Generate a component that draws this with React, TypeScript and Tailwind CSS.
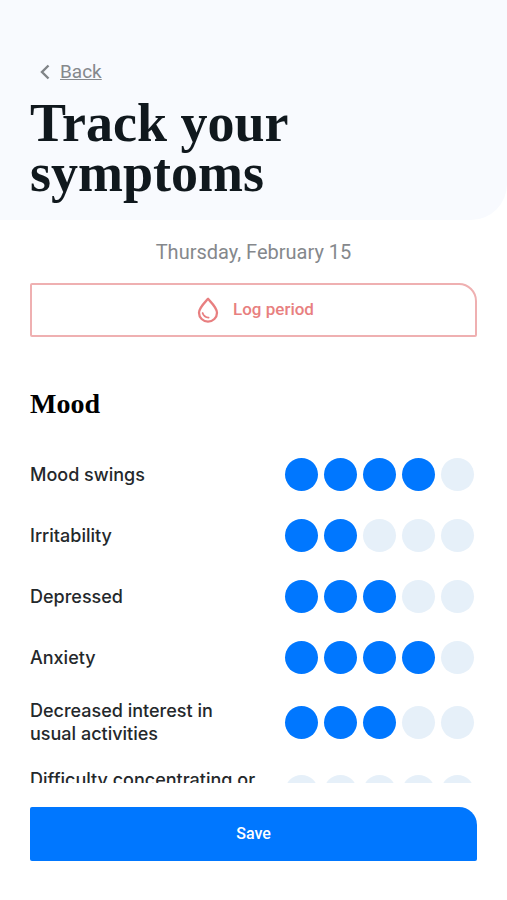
import React, { useState } from "react";

const SYMPTOMS = [
    { id: "mood-swings", label: "Mood swings", level: 4 },
    { id: "irritability", label: "Irritability", level: 2 },
    { id: "depressed", label: "Depressed", level: 3 },
    { id: "anxiety", label: "Anxiety", level: 4 },
    { id: "interest", label: "Decreased interest in usual activities", level: 3 },
    { id: "focus", label: "Difficulty concentrating or focusing", level: 0 },
];

const LEVELS = [1, 2, 3, 4, 5];

type SymptomRowProps = {
    id: string;
    label: string;
    initialLevel: number;
};

const SymptomRow = ({ id, label, initialLevel }: SymptomRowProps) => {
    const [level, setLevel] = useState(initialLevel);

    return (
        <fieldset className="min-w-0" aria-labelledby={`${id}-label`}>
            <div className="flex min-h-[38px] items-center justify-between gap-4 pr-[3px]">
                <span id={`${id}-label`} className="max-w-[230px] text-[18px] leading-[23px] font-medium text-[#24282b]">
                    {label}
                </span>
                <div className="flex shrink-0 gap-[6px]">
                    {LEVELS.map((l) => (
                        <input
                            key={l}
                            type="radio"
                            name={id}
                            value={l}
                            aria-label={`${label}: ${l}`}
                            checked={l === level}
                            onChange={() => setLevel(l)}
                            className={
                                l <= level
                                    ? "size-[33px] cursor-pointer appearance-none rounded-full bg-[#0077ff]"
                                    : "size-[33px] cursor-pointer appearance-none rounded-full bg-[#e6f0f9]"
                            }
                        />
                    ))}
                </div>
            </div>
        </fieldset>
    );
};

const ChevronIcon = () => (
    <svg width="10" height="16" viewBox="0 0 10 16" fill="none" stroke="#808488" strokeWidth="2.4" aria-hidden="true">
        <path d="M8.5 1.5 2 8l6.500 6.500" />
    </svg>
);

const DropIcon = () => (
    <svg width="22" height="26" viewBox="0 0 22 26" fill="none" stroke="#e87f80" strokeLinecap="round" strokeLinejoin="round" aria-hidden="true">
        <path d="M11 1.800C8.500 4.800 2 10.500 2 15.800a9 8.800 0 0 0 18 0C20 10.500 13.500 4.800 11 1.800Z" strokeWidth="2.300" />
        <path d="M5.600 16c.8 2.500 2.900 4.400 6 4.700" strokeWidth="1.800" />
    </svg>
);

const App = () => (
    <main className="flex h-dvh flex-col bg-white font-['Roboto',sans-serif]">
        <header className="shrink-0 rounded-br-[36px] bg-[#f8fafe] px-[30px] pt-[60px] pb-[22px]">
            <a href="#" className="inline-flex items-center gap-[10px] pl-[10px] text-[19px] leading-6 text-[#85888c]">
                <ChevronIcon />
                <span className="underline underline-offset-1">Back</span>
            </a>
            <h1 className="mt-[11px] max-w-[320px] font-['Liberation_Serif',serif] text-[54px] leading-[50px] font-bold text-[#10181d]">
                Track your symptoms
            </h1>
        </header>
        <div className="shrink-0 px-[30px] pt-5">
            <p className="text-center text-[20px] leading-6 text-[#85888c]">Thursday, February 15</p>
            <button className="mt-[19px] flex h-[54px] w-full items-center justify-center gap-[14px] rounded-[2px] rounded-tr-[18px] border-2 border-[#efb0b1] pl-1 text-[17px] font-medium text-[#e87f80]">
                <DropIcon />
                Log period
            </button>
        </div>
        <section className="mt-[51px] min-h-0 flex-1 overflow-hidden px-[30px] font-['Inter',sans-serif]">
            <h2 className="font-['Liberation_Serif',serif] text-[28px] leading-8 font-bold text-black">Mood</h2>
            <div className="mt-[35px] flex flex-col gap-[23px]">
                {SYMPTOMS.map((s) => (
                    <SymptomRow key={s.id} id={s.id} label={s.label} initialLevel={s.level} />
                ))}
            </div>
        </section>
        <footer className="shrink-0 px-[30px] pt-6 pb-[39px]">
            <button className="h-[54px] w-full rounded-[2px] rounded-tr-[18px] bg-[#0077ff] text-[16px] font-medium text-white">
                Save
            </button>
        </footer>
    </main>
);

export default App;
